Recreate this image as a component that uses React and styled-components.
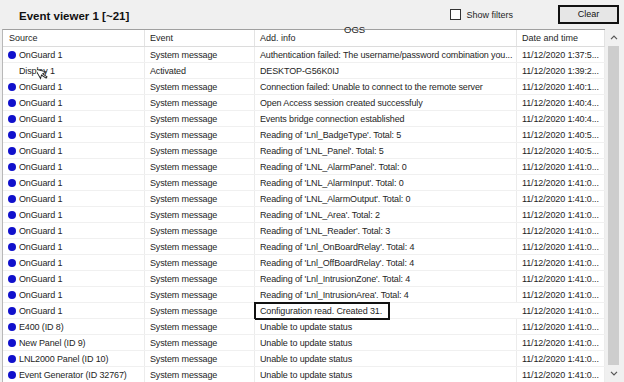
import React from "react";
import styled, { createGlobalStyle } from "styled-components";

const GlobalStyle = createGlobalStyle`
  html, body {
    margin: 0;
    padding: 0;
    background: #f0f0f0;
  }
  body {
    font-family: "Liberation Sans", Arial, sans-serif;
    color: #1e1e1e;
  }
`;

const Window = styled.div`
  position: relative;
  width: 624px;
  height: 382px;
  overflow: hidden;
  background: #f0f0f0;
  display: flex;
  flex-direction: column;
`;

const TopBar = styled.div`
  height: 29px;
  flex: none;
  display: flex;
  align-items: center;
  padding: 0 5px 0 19px;
  box-sizing: border-box;
`;

const Title = styled.div`
  font-weight: bold;
  font-size: 11.5px;
  color: #111;
  flex: 1;
  padding-top: 2px;
`;

const FilterToggle = styled.label`
  display: flex;
  align-items: center;
  gap: 5px;
  font-size: 9px;
  margin-right: 45px;
`;

const Box = styled.span`
  width: 11px;
  height: 11px;
  box-sizing: border-box;
  border: 1px solid #333;
  background: #fff;
`;

const ClearButton = styled.button`
  width: 61px;
  height: 19px;
  margin-top: -1px;
  box-sizing: border-box;
  border: 2px solid #111;
  background: #e6e6e6;
  font-family: inherit;
  font-size: 9px;
  color: #111;
  padding: 0;
`;

const Body = styled.div`
  flex: 1;
  display: flex;
  padding-left: 2px;
  min-height: 0;
`;

const Table = styled.div`
  flex: 1;
  background: #fff;
  border-top: 1px solid #a0a0a0;
  border-left: 1px solid #b8b8b8;
  display: flex;
  flex-direction: column;
  min-width: 0;
`;

const cols = "142px 110px 262px 88px";

const HeaderRow = styled.div`
  display: grid;
  grid-template-columns: ${cols};
  height: 16px;
  border-bottom: 1px solid #dcdcdc;
  flex: none;
`;

const HeaderCell = styled.div`
  font-size: 9px;
  padding-left: ${(p) => p.$pad || 5}px;
  line-height: 16px;
  border-right: 1px solid #e3e3e3;
  white-space: nowrap;
  overflow: hidden;
`;

const Row = styled.div`
  display: grid;
  grid-template-columns: ${cols};
  height: 16px;
  border-bottom: 1px solid #f0f0f0;
  box-sizing: border-box;
  flex: none;
`;

const Cell = styled.div`
  position: relative;
  display: flex;
  align-items: center;
  font-size: 9px;
  letter-spacing: -0.13px;
  padding-left: ${(p) => p.$pad || 5}px;
  border-right: 1px solid #ececec;
  white-space: nowrap;
  overflow: hidden;
  box-sizing: border-box;
  ${(p) =>
    p.$focused &&
    `
    justify-self: start;
    border: 2px solid #111;
    padding: 0 6px 0 4px;
    margin: -1px 0 -1px -1px;
    height: 18px;
    background: #fff;
  `}
`;

const Dot = styled.span`
  width: 8px;
  height: 8px;
  border-radius: 50%;
  background: ${(p) => (p.$hidden ? "transparent" : "#1010cc")};
  margin-right: 3px;
  flex: none;
`;

const Scrollbar = styled.div`
  width: 17px;
  margin-right: 2px;
  background: #f0f0f0;
  display: flex;
  flex-direction: column;
  align-items: center;
  flex: none;
`;

const Arrow = styled.div`
  height: 17px;
  display: flex;
  align-items: center;
  justify-content: center;
  flex: none;
`;

const Thumb = styled.div`
  flex: 1;
  width: 11px;
  background: #cdcdcd;
`;

const Stray = styled.div`
  position: absolute;
  left: 344px;
  top: 24px;
  font-size: 9.5px;
  color: #222;
`;

const Pointer = styled.svg`
  position: absolute;
  left: 37px;
  top: 65px;
`;

const t = "11/12/2020 ";
const rows = [
  ["OnGuard 1", "System message", "Authentication failed: The username/password combination you...", t + "1:37:5..."],
  ["Display 1", "Activated", "DESKTOP-G56K0IJ", t + "1:39:2...", true],
  ["OnGuard 1", "System message", "Connection failed: Unable to connect to the remote server", t + "1:40:1..."],
  ["OnGuard 1", "System message", "Open Access session created successfuly", t + "1:40:4..."],
  ["OnGuard 1", "System message", "Events bridge connection established", t + "1:40:4..."],
  ["OnGuard 1", "System message", "Reading of 'Lnl_BadgeType'. Total: 5", t + "1:40:5..."],
  ["OnGuard 1", "System message", "Reading of 'LNL_Panel'. Total: 5", t + "1:40:5..."],
  ["OnGuard 1", "System message", "Reading of 'LNL_AlarmPanel'. Total: 0", t + "1:41:0..."],
  ["OnGuard 1", "System message", "Reading of 'LNL_AlarmInput'. Total: 0", t + "1:41:0..."],
  ["OnGuard 1", "System message", "Reading of 'LNL_AlarmOutput'. Total: 0", t + "1:41:0..."],
  ["OnGuard 1", "System message", "Reading of 'LNL_Area'. Total: 2", t + "1:41:0..."],
  ["OnGuard 1", "System message", "Reading of 'LNL_Reader'. Total: 3", t + "1:41:0..."],
  ["OnGuard 1", "System message", "Reading of 'Lnl_OnBoardRelay'. Total: 4", t + "1:41:0..."],
  ["OnGuard 1", "System message", "Reading of 'Lnl_OffBoardRelay'. Total: 4", t + "1:41:0..."],
  ["OnGuard 1", "System message", "Reading of 'Lnl_IntrusionZone'. Total: 4", t + "1:41:0..."],
  ["OnGuard 1", "System message", "Reading of 'Lnl_IntrusionArea'. Total: 4", t + "1:41:0..."],
  ["OnGuard 1", "System message", "Configuration read. Created 31.", t + "1:41:0...", false, true],
  ["E400 (ID 8)", "System message", "Unable to update status", t + "1:41:0..."],
  ["New Panel (ID 9)", "System message", "Unable to update status", t + "1:41:0..."],
  ["LNL2000 Panel (ID 10)", "System message", "Unable to update status", t + "1:41:0..."],
  ["Event Generator (ID 32767)", "System message", "Unable to update status", t + "1:41:0..."],
];

const Chevron = ({ up }) => (
  <svg width="8" height="5" viewBox="0 0 8 5">
    <path
      d={up ? "M1 4.2 L4 1.2 L7 4.2" : "M1 0.8 L4 3.8 L7 0.8"}
      fill="none"
      stroke="#555"
      strokeWidth="1.2"
    />
  </svg>
);

export default function App() {
  return (
    <Window>
      <GlobalStyle />
      <TopBar>
        <Title>Event viewer 1 [~21]</Title>
        <FilterToggle>
          <Box />
          Show filters
        </FilterToggle>
        <ClearButton>Clear</ClearButton>
      </TopBar>
      <Body>
        <Table>
          <HeaderRow>
            <HeaderCell $pad={6}>Source</HeaderCell>
            <HeaderCell>Event</HeaderCell>
            <HeaderCell>Add. info</HeaderCell>
            <HeaderCell>Date and time</HeaderCell>
          </HeaderRow>
          {rows.map(([src, ev, info, date, noDot, focused], i) => (
            <Row key={i}>
              <Cell $pad={5}>
                <Dot $hidden={noDot} />
                {src}
              </Cell>
              <Cell>{ev}</Cell>
              <Cell $focused={focused}>{info}</Cell>
              <Cell>{date}</Cell>
            </Row>
          ))}
        </Table>
        <Scrollbar>
          <Arrow>
            <Chevron up />
          </Arrow>
          <Thumb />
          <Arrow>
            <Chevron />
          </Arrow>
        </Scrollbar>
      </Body>
      <Stray>OGS</Stray>
      <Pointer width="12" height="16" viewBox="0 0 12 16">
        <path
          d="M1 1 L1 12 L3.5 9.5 L6 14.5 L7.5 13.8 L5.2 9 L9 9 Z"
          fill="#fff"
          stroke="#222"
          strokeWidth="0.9"
          transform="rotate(-30 5 8)"
        />
      </Pointer>
    </Window>
  );
}
